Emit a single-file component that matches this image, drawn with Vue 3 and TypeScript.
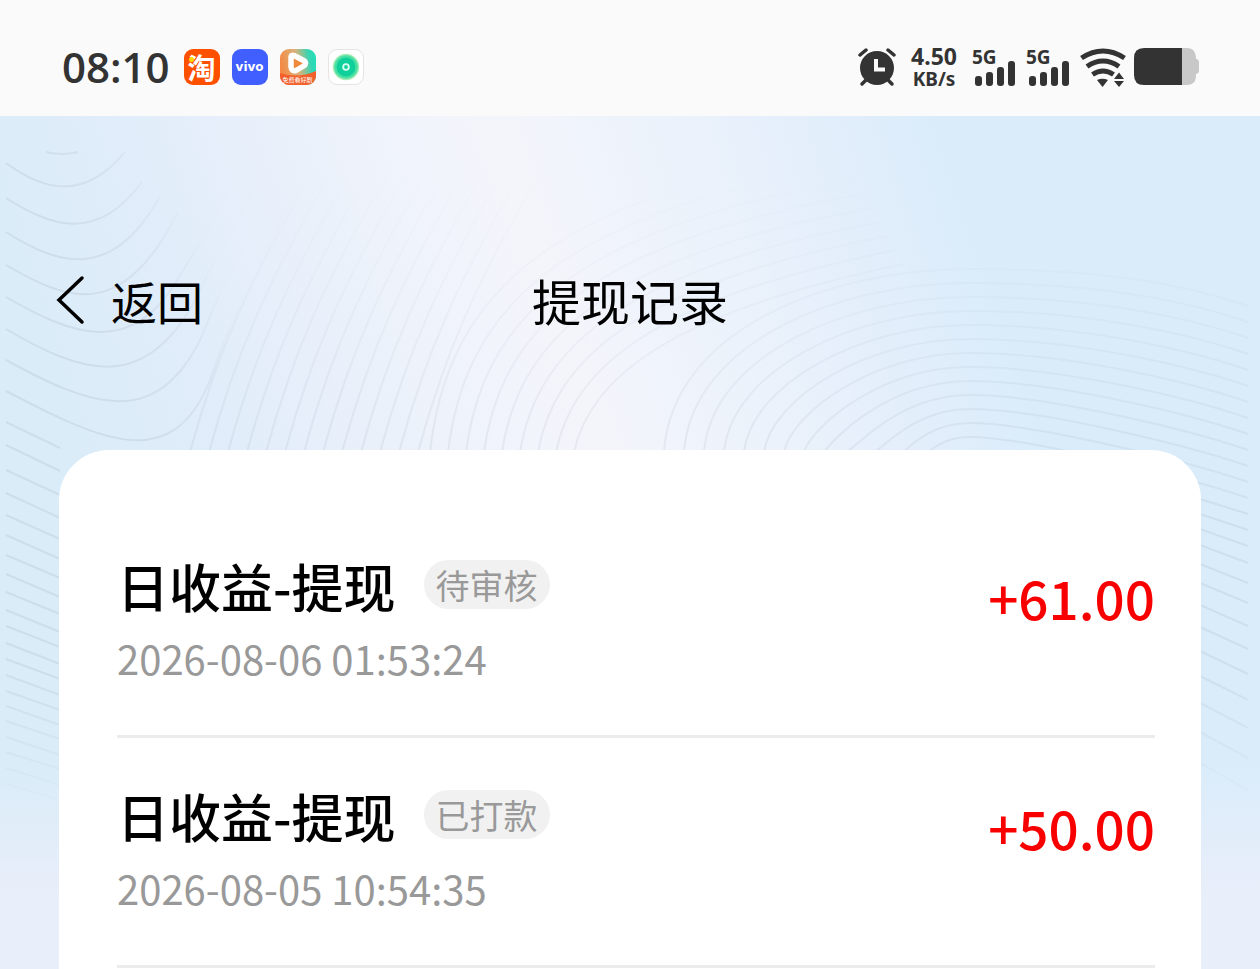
<script setup lang="ts">
interface WithdrawRecord {
  id: number
  title: string
  status: string
  time: string
  amount: string
}

const records: WithdrawRecord[] = [
  { id: 1, title: '日收益-提现', status: '待审核', time: '2026-08-06 01:53:24', amount: '+61.00' },
  { id: 2, title: '日收益-提现', status: '已打款', time: '2026-08-05 10:54:35', amount: '+50.00' },
]

const signalBars = [
  { x: 3, y: 28, h: 10 },
  { x: 14, y: 24, h: 14 },
  { x: 25, y: 19, h: 19 },
  { x: 36, y: 13, h: 25 },
]

// Contour lines of the backdrop, in a 1260 x 853 canvas.
const bowls: string[] = [
  'M46 36Q62 40 78 36',
  'M6 47C40 72 82 88 125 36',
  'M6 82C50 110 96 128 142 66',
  'M6 116C56 148 112 168 160 80',
  'M6 149C66 184 122 208 178 96',
  'M6 181C70 218 130 242 176 166Q200 128 230 72',
  'M6 213C82 258 142 276 192 190Q222 130 255 66',
  'M6 244C90 290 156 316 202 220Q236 134 280 64',
  'M6 275C100 324 172 360 210 264Q250 150 305 64',
]

const waves: string[] = Array.from({ length: 13 }, (_, i) => {
  const x = 190 + i * 19
  return `M${x} 336C${x + 26} 240 ${x + 60} 160 ${x + 130} 44`
})

const arcs: string[] = Array.from({ length: 9 }, (_, i) => {
  const x = 430 + i * 18
  const y = 36 + i * 14
  return `M${x} 336C${x + 16} ${200 + i * 8} ${x + 90} ${y + 50} ${840 + i * 8} ${y}`
})

const hills: string[] = Array.from({ length: 13 }, (_, i) => {
  const x = 664 + i * 20
  const top = 153 + i * 14
  const end = 190 + i * 16
  return `M${x} 336C${x + 8} ${top + 60} ${830 + i * 7} ${top} 970 ${top}S1190 ${end - 20} 1248 ${end}`
})

const leftStarts = [306, 329, 354, 377, 399, 419, 439, 458, 476, 494, 510, 527, 543, 559, 575, 590, 605, 621, 636, 652, 668]
const leftStripes: string[] = leftStarts.map((y, i) => `M6 ${y}L60 ${y + 26 - Math.floor(i / 2)}`)

const rightEnds = [398, 414, 430, 447, 467, 487, 510, 533, 558, 584, 612, 642, 674]
const rightStripes: string[] = rightEnds.map((y, i) => `M1200 ${y - 15 - i}L1248 ${y}`)

const edges: string[] = [...leftStripes, ...rightStripes]
const slopes: string[] = [...waves, ...arcs, ...hills]
</script>

<template>
  <div class="screen">
    <header class="status">
      <div class="status-left">
        <time class="clock">08:10</time>
        <span class="app taobao">淘</span>
        <span class="app vivo">vivo</span>
        <span class="app video">
          <svg viewBox="0 0 36 36" aria-hidden="true">
            <defs>
              <linearGradient id="videoBg" x1="0" y1="0.3" x2="1" y2="0.1">
                <stop offset="0" stop-color="#f48a45" />
                <stop offset="0.45" stop-color="#d9b27a" />
                <stop offset="0.8" stop-color="#35d6b4" />
                <stop offset="1" stop-color="#1fe0b8" />
              </linearGradient>
            </defs>
            <rect width="36" height="36" fill="url(#videoBg)" />
            <path d="M0 24Q18 30 36 22V36H0Z" fill="#f2602c" />
            <path d="M11 8Q11 5.500 14 6.500L24.500 12Q26.500 14 24.500 16.500L16 21.500Q11.500 22.500 11 18Z" fill="#f08a3c" stroke="#fff" stroke-width="5.500" stroke-linejoin="round" />
          </svg>
          <span class="video-label">免费看好剧</span>
        </span>
        <span class="app ring">
          <svg viewBox="0 0 36 36" aria-hidden="true">
            <circle cx="18" cy="18" r="14" fill="#a5ecb4" />
            <circle cx="18" cy="18" r="12.500" fill="#4adfa4" />
            <circle cx="18" cy="18" r="10" fill="#0fcf9b" />
            <circle cx="18" cy="18" r="3" fill="none" stroke="#d8fff2" stroke-width="2" />
          </svg>
        </span>
      </div>
      <div class="status-right">
        <svg class="alarm" viewBox="0 0 38 40" aria-label="闹钟" role="img">
          <g fill="none" stroke="#333" stroke-linecap="round">
            <path d="M2 8L8 3M36 8L30 3" stroke-width="3.500" />
            <path d="M8 33L4 37M30 33L34 37" stroke-width="3.500" />
          </g>
          <circle cx="19" cy="21" r="17" fill="#333" />
          <path d="M18 12V22.500H27" fill="none" stroke="#fafafa" stroke-width="4" />
        </svg>
        <div class="speed"><span>4.50</span><small>KB/s</small></div>
        <div v-for="n in 2" :key="n" class="signal">
          <span class="net">5G</span>
          <svg viewBox="0 0 44 38" aria-hidden="true">
            <rect v-for="b in signalBars" :key="b.x" :x="b.x" :y="b.y" width="7" :height="b.h" rx="3" fill="#333" />
          </svg>
        </div>
        <svg class="wifi" viewBox="0 0 46 40" aria-label="无线网络" role="img">
          <g fill="none" stroke="#333" stroke-width="5">
            <path d="M1.500 11Q23 -3 44.500 11" />
            <path d="M7 19.500Q23 8.500 39 19.500" />
            <path d="M12.500 27.500Q23 20.500 33.500 27.500" />
          </g>
          <path d="M17 33Q22.500 30.500 28 33L22.500 40Z" fill="#333" />
          <path d="M34 32L39 25.500L44 32ZM34 34H44L39 40Z" fill="#333" />
        </svg>
        <svg class="battery" viewBox="0 0 66 38" aria-label="电量" role="img">
          <path d="M48 0H53Q61 0 62 9V11Q65 11 65 15V22Q65 26 62 26V29Q61 37 53 37H48Z" fill="#c8c8c8" />
          <path d="M48 0H10Q0 0 0 10V27Q0 37 10 37H48Z" fill="#333" />
        </svg>
      </div>
    </header>

    <main class="page">
      <svg class="contours" viewBox="0 0 1260 853" preserveAspectRatio="none" aria-hidden="true">
        <defs>
          <linearGradient id="bowlFade" gradientUnits="userSpaceOnUse" x1="0" y1="0" x2="260" y2="-120">
            <stop offset="0" stop-color="#8c96a8" stop-opacity="0.17" />
            <stop offset="0.2" stop-color="#8c96a8" stop-opacity="0.14" />
            <stop offset="0.48" stop-color="#8c96a8" stop-opacity="0.01" />
          </linearGradient>
          <linearGradient id="slopeFade" gradientUnits="userSpaceOnUse" x1="0" y1="0" x2="0" y2="853">
            <stop offset="0.05" stop-color="#8c96a8" stop-opacity="0" />
            <stop offset="0.2" stop-color="#8c96a8" stop-opacity="0.05" />
            <stop offset="0.38" stop-color="#8c96a8" stop-opacity="0.13" />
          </linearGradient>
          <linearGradient id="edgeFade" gradientUnits="userSpaceOnUse" x1="0" y1="0" x2="0" y2="853">
            <stop offset="0.65" stop-color="#8c96a8" stop-opacity="0.16" />
            <stop offset="0.83" stop-color="#8c96a8" stop-opacity="0" />
          </linearGradient>
        </defs>
        <path v-for="d in bowls" :key="d" :d="d" stroke="url(#bowlFade)" />
        <path v-for="d in slopes" :key="d" :d="d" stroke="url(#slopeFade)" />
        <path v-for="d in edges" :key="d" :d="d" stroke="url(#edgeFade)" />
      </svg>

      <nav class="nav">
        <button class="back" type="button">
          <svg viewBox="0 0 30 50" aria-hidden="true">
            <path d="M27 3L4 25L27 47" fill="none" stroke="#000" stroke-width="3.500" stroke-linecap="round" />
          </svg>
          <span>返回</span>
        </button>
        <h1>提现记录</h1>
      </nav>

      <ul class="card">
        <li v-for="r in records" :key="r.id" class="record">
          <div class="info">
            <div class="heading">
              <h2>{{ r.title }}</h2>
              <span class="badge">{{ r.status }}</span>
            </div>
            <time class="date">{{ r.time }}</time>
          </div>
          <strong class="amount">{{ r.amount }}</strong>
        </li>
      </ul>
    </main>
  </div>
</template>

<style>
body {
  overflow: hidden;
}
</style>

<style scoped>
.screen {
  display: flex;
  flex-direction: column;
  height: 100vh;
  overflow: hidden;
  font-family: "Noto Sans CJK SC", sans-serif;
  color: #000;
}

.status {
  display: flex;
  flex: none;
  justify-content: space-between;
  align-items: center;
  box-sizing: border-box;
  height: 116px;
  padding: 18px 60px 0 62px;
  background: #fafafa;
  color: #333;
}

.status-left,
.status-right {
  display: flex;
  align-items: center;
}

.status-left {
  gap: 12px;
}

.clock {
  margin-right: 2px;
  font-family: "Open Sans", "Noto Sans", sans-serif;
  font-size: 42px;
  font-weight: 600;
  line-height: 48px;
}

.app {
  position: relative;
  display: flex;
  flex: none;
  justify-content: center;
  align-items: center;
  width: 36px;
  height: 36px;
  border-radius: 9px;
  color: #fff;
}

.app svg {
  width: 36px;
  height: 36px;
  border-radius: 9px;
}

.taobao {
  background: #ff5000;
  font-size: 28px;
  font-weight: 700;
  line-height: 36px;
}

.taobao::after {
  content: "";
  position: absolute;
  top: 8px;
  left: 5px;
  width: 5px;
  height: 5px;
  border-radius: 50%;
  background: #ffd800;
}

.vivo {
  background: #415fff;
  font-family: "DejaVu Sans", sans-serif;
  font-size: 12px;
  font-weight: 700;
}

.video-label {
  position: absolute;
  bottom: 1px;
  font-size: 6px;
  line-height: 8px;
  white-space: nowrap;
}

.ring {
  box-sizing: border-box;
  border: 1px solid #e4e4e4;
  background: #fff;
}

.alarm {
  width: 38px;
  height: 40px;
  margin-right: 14px;
}

.speed {
  display: flex;
  flex-direction: column;
  align-items: center;
  width: 48px;
  margin-right: 14px;
  font-family: "Noto Sans", sans-serif;
  font-size: 23px;
  font-weight: 700;
  line-height: 24px;
}

.speed small {
  font-size: 19px;
  line-height: 22px;
}

.signal {
  position: relative;
  width: 44px;
  height: 38px;
  margin-right: 10px;
}

.signal svg {
  display: block;
  width: 44px;
  height: 38px;
}

.net {
  position: absolute;
  top: -1px;
  left: 0;
  font-family: "Noto Sans", sans-serif;
  font-size: 19px;
  font-weight: 700;
  line-height: 20px;
}

.wifi {
  width: 46px;
  height: 40px;
  margin-right: 8px;
}

.battery {
  width: 66px;
  height: 38px;
}

.page {
  position: relative;
  flex: 1;
  min-height: 0;
  background:
    linear-gradient(180deg, rgba(232, 238, 250, 0) 76%, #e8eefa 91%),
    linear-gradient(72deg, #d9ecf8 12%, #dfecfa 24%, #e7effa 33%, #eff3fb 42%, #f4f5fb 50%, #ebf2fb 62%, #e3eefb 71%, #daecfa 79%);
}

.contours {
  position: absolute;
  inset: 0;
  width: 100%;
  height: 100%;
}

.contours path {
  fill: none;
  stroke-width: 2;
}

.nav {
  position: relative;
  display: grid;
  grid-template-columns: 1fr auto 1fr;
  align-items: center;
  height: 334px;
  padding: 34px 55px 0;
  box-sizing: border-box;
}

.back {
  display: flex;
  align-items: center;
  justify-self: start;
  gap: 26px;
  padding: 0;
  border: 0;
  background: none;
  color: #000;
  font-family: inherit;
  font-size: 46px;
  line-height: 60px;
}

.back svg {
  width: 30px;
  height: 50px;
}

h1 {
  margin: 0;
  font-size: 49px;
  font-weight: 400;
  line-height: 60px;
}

.card {
  position: relative;
  box-sizing: border-box;
  min-height: 700px;
  margin: 0 59px;
  padding: 58px 46px 0 58px;
  border-radius: 50px;
  background: #fff;
  list-style: none;
}

.record {
  display: flex;
  justify-content: space-between;
  align-items: flex-start;
  box-sizing: border-box;
  height: 230px;
  padding-top: 38px;
  border-bottom: 3px solid #ececec;
}

.info {
  display: flex;
  flex-direction: column;
  gap: 2px;
}

.heading {
  display: flex;
  align-items: flex-start;
  gap: 28px;
}

h2 {
  margin: 0;
  font-size: 52px;
  font-weight: 500;
  line-height: 80px;
}

.badge {
  margin-top: 14px;
  padding: 0 12px;
  border-radius: 25px;
  background: #f1f1f1;
  color: #999;
  font-size: 34px;
  line-height: 49px;
}

.date {
  color: #999;
  font-size: 40px;
  line-height: 60px;
}

.amount {
  color: #f90000;
  font-size: 53px;
  font-weight: 500;
  line-height: 102px;
}
</style>
